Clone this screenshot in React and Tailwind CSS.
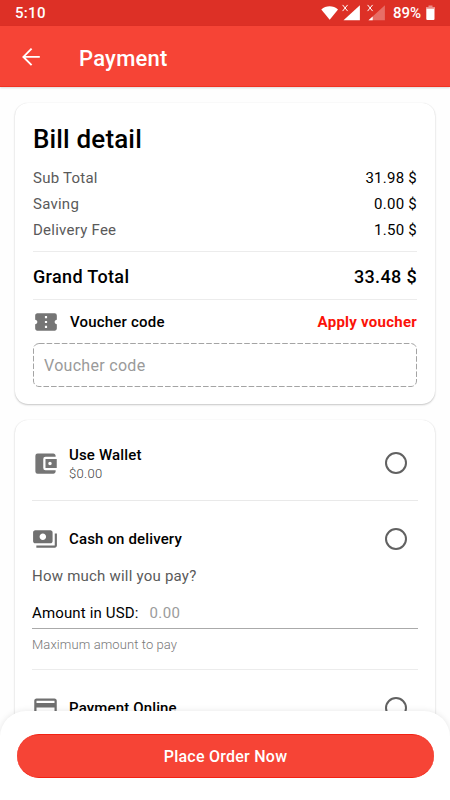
import {
    MdAccountBalanceWallet,
    MdConfirmationNumber,
    MdCreditCard,
    MdPayments,
} from 'react-icons/md';

const charges = [
    { label: 'Sub Total', amount: '31.98 $' },
    { label: 'Saving', amount: '0.00 $' },
    { label: 'Delivery Fee', amount: '1.50 $' },
];

function StatusBar() {
    return (
        <div className="flex h-[26px] shrink-0 items-center bg-[#dd3026] pt-px pr-[15px] pl-[15px] text-white">
            <span className="text-[15px] leading-none font-medium tracking-[0.3px]">
                5:10
            </span>

            <svg
                className="-mt-px ml-auto"
                width="65"
                height="20"
                viewBox="0 0 65 20"
                fill="#fff"
            >
                <path d="M0.3 6.4C4.8 2.1 12.4 2.1 17 6.4L8.7 16.8z" />
                <path d="M38.9 2.2v15H22.5z" />
                <path
                    d="M21.6 1.9l5 6.2M26.6 1.9l-5 6.2M46.6 1.9l5 6.2M51.6 1.9l-5 6.2"
                    stroke="#fff"
                    strokeWidth="1"
                />
                <path d="M63.9 2.2v15H47.5z" opacity="0.3" />
                <path d="M51.7 13.4v3.8h-4.2z" />
            </svg>

            <span className="ml-[7px] text-[15px] leading-none font-medium">
                89%
            </span>

            <svg
                className="-mt-px ml-[5px]"
                width="9"
                height="16"
                viewBox="0 0 9 16"
                fill="#fff"
            >
                <path d="M2.5 0.5h4v1.5H9V4H0V2h2.5z" opacity="0.45" />
                <path d="M0.3 3.7h8.2V14a1 1 0 0 1-1 1h-6.2a1 1 0 0 1-1-1z" />
            </svg>
        </div>
    );
}

function Header() {
    return (
        <header className="z-10 flex h-[61px] shrink-0 items-center border-b border-[#f03322] bg-[#f64436] pt-0.5 pl-[21px] text-white shadow-[0_1px_2px_rgba(0,0,0,0.15)]">
            <svg
                width="20"
                height="20"
                viewBox="0 0 20 20"
                fill="none"
                stroke="#fff"
                strokeWidth="1.9"
            >
                <path d="M18.8 9.9H2.5M10.6 1.7L2.4 9.9l8.2 8.2" />
            </svg>

            <h1 className="mt-[3px] ml-[38px] text-[22px] leading-none font-medium tracking-[0.25px]">
                Payment
            </h1>
        </header>
    );
}

function Radio() {
    return (
        <span className="mr-[11px] ml-auto size-[22px] shrink-0 rounded-full border-2 border-[#616161]" />
    );
}

function BillDetail() {
    return (
        <section className="flex h-[301px] shrink-0 flex-col rounded-[13px] bg-white px-[18px] pt-[18px] shadow-[0_1px_2px_rgba(0,0,0,0.22),0_0_1px_rgba(0,0,0,0.1)]">
            <h2 className="h-[44px] text-[26px] leading-[36px] font-medium tracking-[0.15px]">
                Bill detail
            </h2>

            {charges.map((charge) => (
                <div
                    key={charge.label}
                    className="flex h-[26.3px] items-center justify-between text-[15px] font-[450] tracking-[0.25px]"
                >
                    <span className="text-[#5a5a5a]">{charge.label}</span>
                    <span>{charge.amount}</span>
                </div>
            ))}

            <div className="mt-[7px] flex h-[49px] items-center justify-between border-y border-[#ececec] pt-0.5 text-[18px] font-medium tracking-[0.35px]">
                <span>Grand Total</span>
                <span>{'33.48 $'}</span>
            </div>

            <div className="flex h-[43px] items-center pt-px text-[15px] tracking-[0.2px]">
                <MdConfirmationNumber
                    size={26}
                    className="mr-[11px] text-[#757575]"
                />
                <span className="font-medium">Voucher code</span>
                <span className="ml-auto font-bold tracking-[0.25px] text-[#fb1208]">
                    Apply voucher
                </span>
            </div>

            <div className="relative flex h-[44px] items-center pt-0.5 pl-[11px] text-[16px] tracking-[0.3px] text-[#9a9a9a]">
                <svg className="absolute inset-0 h-full w-full" fill="none">
                    <rect
                        x="0.5"
                        y="0.5"
                        width="383"
                        height="43"
                        rx="5.5"
                        stroke="#a4a4a4"
                        strokeDasharray="5.6 2"
                    />
                </svg>
                Voucher code
            </div>
        </section>
    );
}

function PaymentMethods() {
    return (
        <section className="mt-4 h-[340px] shrink-0 rounded-[13px] bg-white px-[17px] text-[15px] font-medium tracking-[0.15px] shadow-[0_1px_2px_rgba(0,0,0,0.22),0_0_1px_rgba(0,0,0,0.1)]">
            <div className="flex h-[81px] items-center border-b border-[#e9e9e9] pt-[6px]">
                <MdAccountBalanceWallet
                    size={27}
                    className="mr-[10px] text-[#757575]"
                />
                <div className="pt-0.5">
                    <p className="leading-5">Use Wallet</p>
                    <p className="text-[13px] leading-[18px] font-light tracking-[0.3px] text-[#444]">
                        $0.00
                    </p>
                </div>
                <Radio />
            </div>

            <div className="flex h-[57px] items-center pt-[18px]">
                <MdPayments size={26} className="mr-[11px] text-[#707070]" />
                <p className="pt-0.5">Cash on delivery</p>
                <Radio />
            </div>

            <p className="pt-2 leading-5 font-[450] tracking-[0.22px] text-[#5a5a5a]">
                How much will you pay?
            </p>

            <div className="mt-[9px] flex h-[34px] items-center border-b border-[#aaa] pt-[3px] font-normal">
                <span className="tracking-[0.15px]">Amount in USD:</span>
                <span className="ml-[11px] tracking-[0.35px] text-[#9b9b9b]">
                    0.00
                </span>
            </div>

            <p className="h-[41px] border-b border-[#ececec] pt-[6px] text-[13px] leading-5 font-light tracking-[0.1px] text-[#777]">
                Maximum amount to pay
            </p>

            <div className="flex h-[57px] items-center pt-[18px]">
                <MdCreditCard size={27} className="mr-[10px] text-[#707070]" />
                <p className="pt-0.5">Payment Online</p>
                <Radio />
            </div>
        </section>
    );
}

export default function App() {
    return (
        <div className="flex h-[800px] w-[450px] flex-col overflow-hidden bg-[#fefefe] font-[Roboto,sans-serif] text-black">
            <StatusBar />
            <Header />

            <main className="flex min-h-0 flex-1 flex-col overflow-hidden px-[15px] pt-4">
                <BillDetail />
                <PaymentMethods />
            </main>

            <footer className="z-10 -mt-6 h-[89px] shrink-0 rounded-t-[26px] bg-white pt-[23px] pr-4 pl-[17px] shadow-[0_0_6px_rgba(0,0,0,0.1)]">
                <button
                    type="button"
                    className="h-[44px] w-full rounded-full border-y border-[#f22213] bg-[#f64436] pt-0.5 text-[16px] font-medium tracking-[0.25px] text-white"
                >
                    Place Order Now
                </button>
            </footer>
        </div>
    );
}
